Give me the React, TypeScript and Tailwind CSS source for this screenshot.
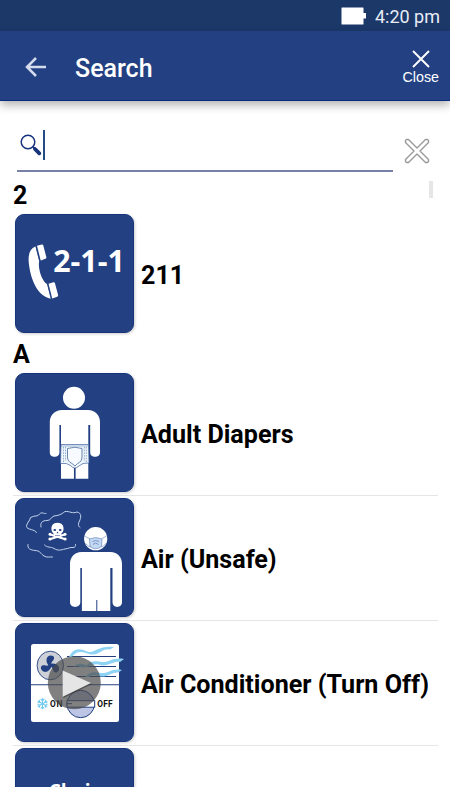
import React from "react";

const NAVY = "#234182";

function PhoneArt() {
  return (
    <g fill="#fff">
      <path d="M20.5 32.3C14.5 35 13 41 13.8 49C15.5 65 22 82 35.8 84.8L32 70C27.500 68 22.500 55 24.200 47Z" />
      <path d="M22 31.700L26.800 30.600Q28 30.400 28.300 31.500L31.300 43Q31.600 44.300 30.500 44.700L25.700 46.400Z" />
      <path d="M33.500 69.700L38.300 68.200Q39.500 67.900 39.900 69L43.100 81Q43.400 82.300 42.200 82.700L37.200 84.500Z" />
      <path d="M20.800 32L24.600 46.800M32.600 69.500L36.300 84.600" stroke={NAVY} strokeWidth="0.6" />
      <text x="38.300" y="58" fontSize="30.300" fontWeight="700" fontFamily="Open Sans, sans-serif">
        2-1-1
      </text>
    </g>
  );
}

function DiapersArt() {
  return (
    <g>
      <circle cx="59" cy="24.700" r="11" fill="#fff" />
      <path
        fill="#fff"
        d="M47 37H73C80 37 85 42 85 49V79.500C85 85.300 75.200 85.300 75.200 79.500V52H73.300V105.700H60.300V90H59V105.700H46V52H44.400V79.500C44.400 85.300 34.800 85.300 34.800 79.500V49C34.800 42 40 37 47 37Z"
      />
      <path d="M46 71.500H73.500L74 90Q67 89.500 64 93Q61.500 95 59.700 95Q57.500 95 55.500 92.500Q52 89.500 45.500 90.500Z" fill="#eef5fb" stroke="#3d62a0" strokeWidth="0.700" />
      <path d="M46 73H73.500" stroke="#6f92b8" strokeWidth="0.600" />
      <path d="M59.700 95V105.700" stroke={NAVY} strokeWidth="1.500" />
      <path d="M52.500 75.500Q60 73 67 75.500V84Q67 88.500 62.500 90.500L60 93L57 90.500Q52.500 88.500 52.500 84Z" fill="#f7fbff" stroke="#46699b" strokeWidth="0.800" />
      <path d="M48.500 74V89M50.500 74V88M69.300 74V88M71.300 74V89" stroke="#7797c0" strokeWidth="0.800" strokeDasharray="1.500 1.200" />
    </g>
  );
}

function UnsafeAirArt() {
  return (
    <g>
      <g fill="none" stroke="#c4d5ec" strokeWidth="1" strokeLinecap="round">
        <path d="M21.500 34.500C20 31 12 32 11.500 28.500C11.500 25 15 23 15.500 19.500C20 17 23 19 24.500 16C27 13.500 28.500 16 31 15.500" />
        <path d="M26 29C25 25 27 22.500 32 22.500C36 22.500 36 19 39 18C45 17.500 48 15 50 13.500C55 13 57 16 62 14C67 15 66 20 64.500 23C63 26 63 28 65 29.500" />
        <path d="M13 46.500C12 51 16 52 20 52.500C25 52.500 26 56 29 58C32 60 35 58.500 37.500 59" />
        <path d="M29.500 47C32 50 36 48.500 39 50.500C43 53 46 52 50 51C54 50.500 55 49 58 49.500C60 49.500 61 48 60.500 46.500" />
      </g>
      <g stroke="#fff" strokeWidth="2.200" strokeLinecap="round">
        <path d="M35.500 36.500L49.500 41M49.500 36.500L35.500 41" />
      </g>
      <g fill="#fff">
        <circle cx="35" cy="36.300" r="1.500" />
        <circle cx="34.900" cy="40.900" r="1.500" />
        <circle cx="50" cy="36.300" r="1.500" />
        <circle cx="50.100" cy="40.900" r="1.500" />
        <path d="M42.500 24.800C47 24.800 49 28 48.500 31.500C48.300 34.500 46.500 34.600 46.300 36.500V39H38.700V36.500C38.500 34.600 36.700 34.500 36.500 31.500C36 28 38 24.800 42.500 24.800Z" />
      </g>
      <g fill={NAVY}>
        <ellipse cx="39.800" cy="32" rx="1.400" ry="1" />
        <ellipse cx="45.200" cy="32" rx="1.400" ry="1" />
        <path d="M42.500 33.500L43.500 35.300H41.500ZM40 37H45V37.500H40Z" />
      </g>
      <circle cx="80.700" cy="40.700" r="11.600" fill="#fff" />
      <path
        fill="#fff"
        d="M66.500 54H95.500C102.500 54 107 59 107 66V104C107 110.500 97.500 110.500 97.500 104V70H95.300V113H82.300V102H81.300V113H66.900V70H65.300V104C65.300 110.500 55 110.500 55 104V66C55 59 59.500 54 66.500 54Z"
      />
      <path d="M69.500 37.500Q72 40 75 40.700M92 37.500Q89 40 86.500 40.700M70.500 45.500Q73 48.500 76 49M91 45.500Q88.500 48.500 86 49" fill="none" stroke="#758ebd" strokeWidth="0.700" />
      <path d="M74.500 41Q80.500 38 87 41L86.500 48.500Q80.500 53 75 48.500Z" fill="#c3d8f3" stroke="#6f8dc2" strokeWidth="0.700" />
      <path d="M77.500 43.500Q80.500 41.500 84 43.500M78 46.500L80.500 45L83.500 46.500" fill="none" stroke="#5b7ab3" strokeWidth="0.700" />
    </g>
  );
}

function AirConditionerArt() {
  return (
    <g>
      <rect x="16" y="21" width="88" height="78" rx="2.500" fill="#fff" />
      <path d="M16 61.800H104M52 33.500H101M52 43.500H101M54 53.500H101" stroke={NAVY} strokeWidth="1.100" />
      <g fill="#8fd3f4">
        <path d="M54 34C58 25 65 25 71 28C79 32 82 22 99 24L95 26.500C86 25 84 34 74 31C66 28 61 28 57 34Z" />
        <path d="M71 43.500C75 37 82 38 87 39C93 40 98 34 109 36L105 39C99 38 94 43 87 42.500C81 40.500 78 41 75 43.500Z" />
        <path d="M70 54C75 48 80 49 86 50C93 51 97 45 107 47L103 49.500C97 49 93 54 86 53.500C79 51.500 77 52 74 54Z" />
        <path d="M58 44Q63 39 68 41Q72 43 75 41.500Q71 46 66 44Q62 42.500 58 44Z" />
      </g>
      <ellipse cx="35.300" cy="42.500" rx="13.200" ry="14.300" fill="#cdd0d6" stroke={NAVY} strokeWidth="0.900" />
      <g fill={NAVY} transform="translate(35.300 42.300)">
        <path d="M-0.500 1C-5-2-5-9 0-9.800C5-10 4.500-6 2-4C0.500-2.500 1-1 1 1Z" />
        <path d="M-0.500 1C-5-2-5-9 0-9.800C5-10 4.500-6 2-4C0.500-2.500 1-1 1 1Z" transform="rotate(120)" />
        <path d="M-0.500 1C-5-2-5-9 0-9.800C5-10 4.500-6 2-4C0.500-2.500 1-1 1 1Z" transform="rotate(240)" />
        <circle r="2" />
      </g>
      <circle cx="65.700" cy="81" r="13.700" fill="#bcc5e4" stroke={NAVY} strokeWidth="1" />
      <rect x="52" y="77.700" width="27.700" height="6.500" fill="#fff" stroke={NAVY} strokeWidth="1" />
      <path d="M52 80.700H57" stroke={NAVY} strokeWidth="1" />
      <g stroke="#72caef" strokeWidth="1.100">
        {[0, 60, 120].map((angle) => (
          <path
            key={angle}
            fill="none"
            transform={`translate(27.500 80.700) rotate(${angle})`}
            d="M0-5.500V5.500M-1.800-4.700L0-3L1.800-4.700M-1.800 4.700L0 3L1.800 4.700"
          />
        ))}
      </g>
      <g fill="#111" fontSize="8.300" fontWeight="700" fontFamily="Roboto, sans-serif">
        <text x="35" y="84" textLength="12.300">ON</text>
        <text x="82.300" y="84" textLength="15.300">OFF</text>
      </g>
      <circle cx="59.300" cy="59.700" r="26.500" fill="#4a4a4a" fillOpacity="0.700" />
      <path d="M48.500 48.500L77 61L48.500 75Z" fill="#333" fillOpacity="0.600" />
      <path d="M47.700 47.500L76 60L47.700 73.700Z" fill="#e5e5e5" />
    </g>
  );
}

function ChairArt() {
  return (
    <text x="59" y="49.500" textAnchor="middle" fill="#fff" fontSize="19" fontWeight="700" fontFamily="Open Sans, sans-serif">
      Chair
    </text>
  );
}

interface RowProps {
  label?: string;
  divider?: boolean;
  children: React.ReactNode;
}

function Row({ label, divider, children }: RowProps) {
  return (
    <li className={`flex shrink-0 items-center pt-0.5 pb-[3px] pl-0.5 ${divider ? "border-b border-[#e6e6e6]" : ""}`}>
      <div className="h-[119px] w-[119px] shrink-0 overflow-hidden rounded-[9px] border border-[#17357c] bg-[#234182] shadow-[1px_1px_3px_rgba(0,0,0,0.2)]">
        <svg viewBox="0 0 119 119" className="-m-px block h-[119px] w-[119px] max-w-none">
          {children}
        </svg>
      </div>
      <span className="ml-[7px] pt-[5px] text-[25.1px] leading-8 font-bold whitespace-nowrap">{label}</span>
    </li>
  );
}

function SectionHeader({ title }: { title: string }) {
  return <h2 className="h-[35px] text-[25px] leading-[38px] font-bold">{title}</h2>;
}

export default function App() {
  return (
    <div className="flex h-[800px] w-[450px] flex-col overflow-hidden bg-white font-[Roboto,sans-serif] text-black">
      <div className="flex h-[31px] shrink-0 items-center justify-end bg-[#1b3869] pr-[10px] text-[#e8edf5]">
        <svg viewBox="0 0 25 18" className="mr-[9px] h-[18px] w-[25px]" fill="#fff">
          <path d="M1 0.500H22Q22.500 0.500 22.500 1V6H25V11.500H22.500V17Q22.500 17.500 22 17.500H1Q0.500 17.500 0.500 17V1Q0.500 0.500 1 0.500Z" />
        </svg>
        <span className="pt-0.5 text-[18px] leading-6">4:20 pm</span>
      </div>

      <header className="z-10 flex h-[70px] shrink-0 items-center border-b border-[#092a7c] bg-[#234182] pr-[11px] pl-[25px] text-white shadow-[0_4px_9px_rgba(0,0,0,0.3)]">
        <svg viewBox="0 0 22 20" className="mt-0.5 h-5 w-[22px]" fill="none" stroke="#d3dbed" strokeWidth="2.500">
          <path d="M21 10H2M11 1L2 10L11 19" />
        </svg>
        <h1 className="ml-7 flex-1 pt-[6px] text-[25px] leading-8 font-medium">Search</h1>
        <button className="flex flex-col items-center">
          <svg viewBox="0 0 18 18" className="mt-1 h-[18px] w-[18px]" fill="none" stroke="#fff" strokeWidth="1.900">
            <path d="M1 1L17 17M17 1L1 17" />
          </svg>
          <span className="mt-px font-['Liberation_Sans',sans-serif] text-[14.3px] leading-4">Close</span>
        </button>
      </header>

      <div className="flex h-[76px] shrink-0 items-start pt-[28px] pl-[17px]">
        <div className="flex h-[43px] w-[376px] items-start border-b-2 border-[#7882a8] pl-[3px]">
          <svg viewBox="0 0 22 22" className="mt-[5px] h-[22px] w-[22px]" fill="none" stroke="#16337c">
            <circle cx="8" cy="8" r="6.800" strokeWidth="1.500" />
            <path d="M12.700 12.700L15 15" strokeWidth="1.800" />
            <path d="M15 15L19.300 19.300" strokeWidth="3.800" strokeLinecap="round" />
          </svg>
          <div className="mt-[1px] ml-[1px] h-[30px] w-[2px] bg-[#234b86]" />
        </div>
        <svg viewBox="0 0 26 26" className="mt-[9px] ml-[11px] h-[26px] w-[26px]" fill="#fff" stroke="#999" strokeWidth="1.400" strokeLinejoin="round">
          <path d="M1.500 4.500L1.500 2.500L2.500 1.500L4.500 1.500L13 10L21.500 1.500L23.500 1.500L24.500 2.500L24.500 4.500L16 13L24.500 21.500L24.500 23.500L23.500 24.500L21.500 24.500L13 16L4.500 24.500L2.500 24.500L1.500 23.500L1.500 21.500L10 13Z" />
        </svg>
      </div>

      <div className="flex h-[610px] shrink-0 overflow-hidden pl-[13px]">
        <ul className="flex w-[425px] shrink-0 flex-col">
          <SectionHeader title="2" />
          <Row label="211">
            <PhoneArt />
          </Row>
          <SectionHeader title="A" />
          <Row label="Adult Diapers" divider>
            <DiapersArt />
          </Row>
          <Row label="Air (Unsafe)" divider>
            <UnsafeAirArt />
          </Row>
          <Row label="Air Conditioner (Turn Off)" divider>
            <AirConditionerArt />
          </Row>
          <Row>
            <ChairArt />
          </Row>
        </ul>
        <div className="mt-1 -ml-[9px] h-[17px] w-1 bg-[#e6e6e6]" />
      </div>
    </div>
  );
}
